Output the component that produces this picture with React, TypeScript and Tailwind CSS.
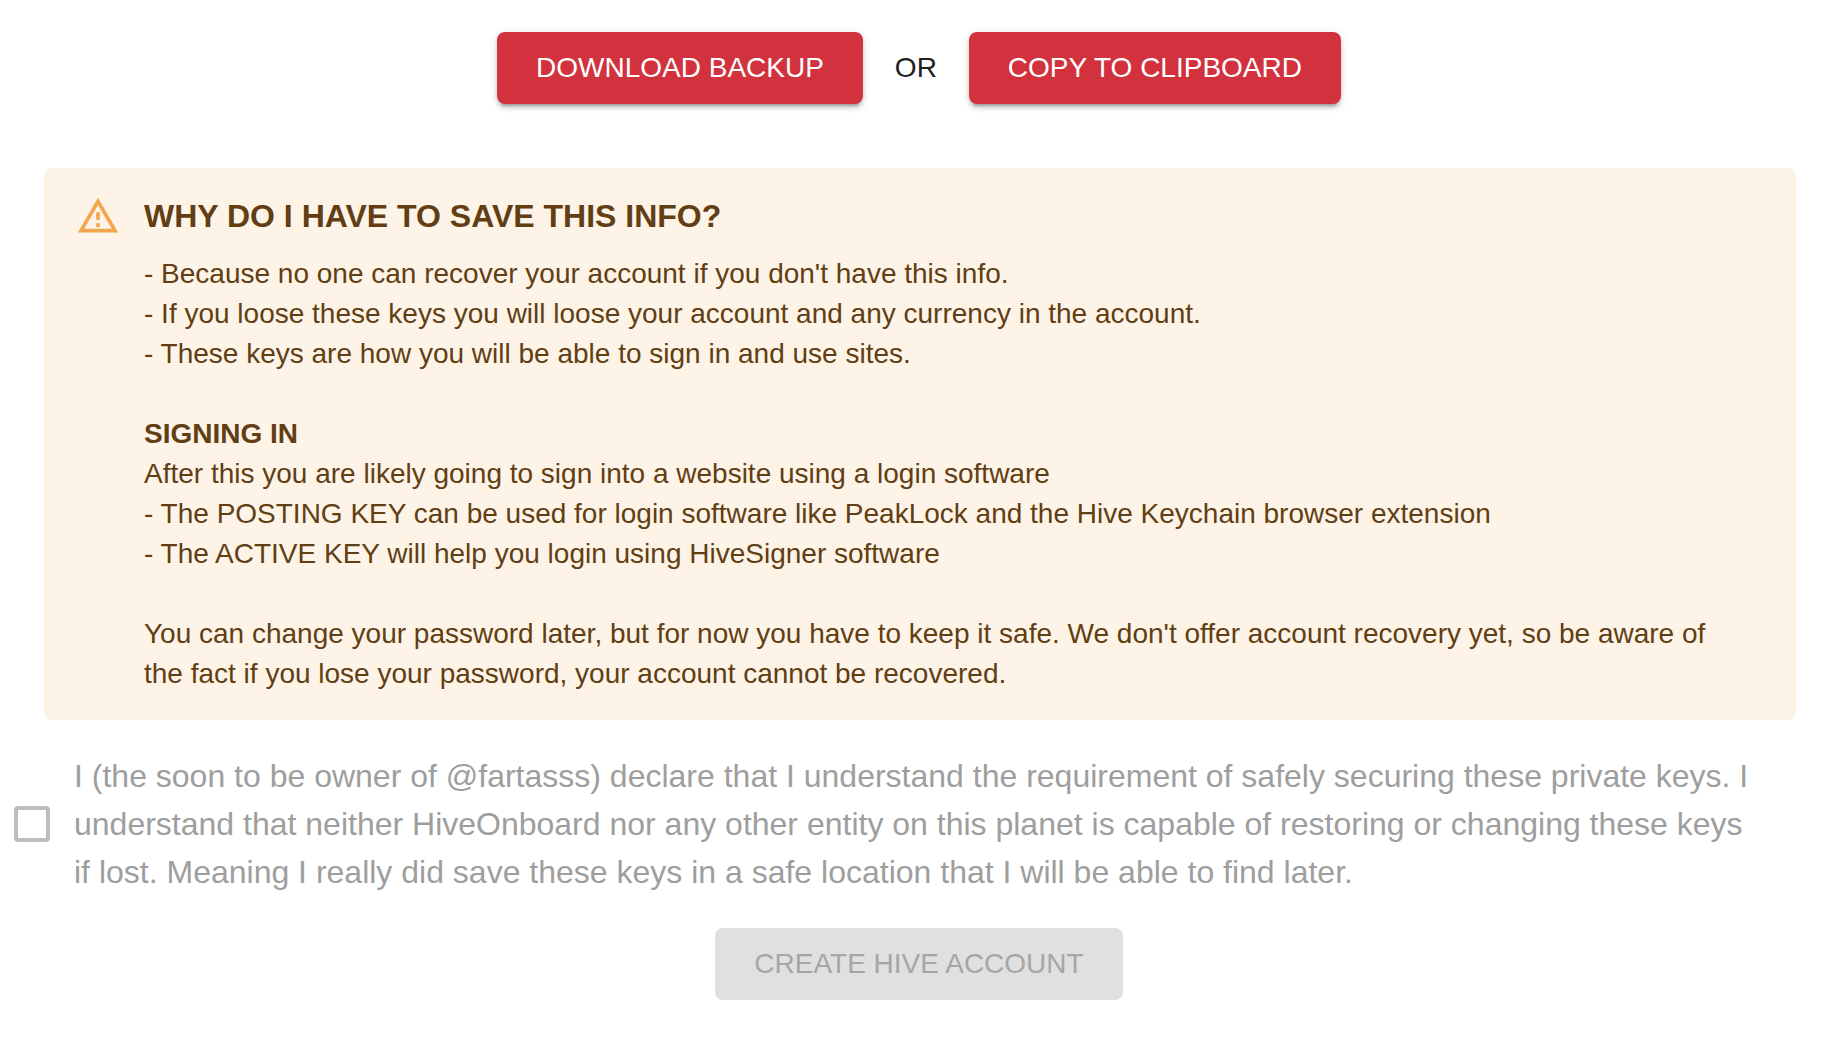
import { useState } from "react";

const BUTTON_BASE = "h-[72px] rounded-lg px-[39px] text-[28px] leading-[48px]";
const PRIMARY_BUTTON =
  "bg-[#d1323e] text-white shadow-[0_6px_2px_-4px_rgba(0,0,0,0.2),0_4px_4px_0_rgba(0,0,0,0.14),0_2px_10px_0_rgba(0,0,0,0.12)]";

function WarningIcon() {
  return (
    <svg
      viewBox="0 0 24 24"
      className="mt-[14px] size-11 flex-none fill-[#f3a64b]"
      aria-hidden="true"
    >
      <path d="M12 5.99L19.53 19H4.47L12 5.99M12 2L1 21h22L12 2zm1 14h-2v2h2v-2zm0-6h-2v4h2v-4z" />
    </svg>
  );
}

function SaveInfoAlert() {
  return (
    <section
      role="alert"
      className="mt-16 mr-[42px] ml-11 flex gap-6 rounded-lg bg-[#fdf3e7] px-8 py-3 text-[#613e13]"
    >
      <WarningIcon />
      <div className="pt-3 pr-5 pb-[14px] text-[28px] leading-10">
        <h2 className="mb-[14px] text-[32px] leading-[48px] font-bold">
          WHY DO I HAVE TO SAVE THIS INFO?
        </h2>
        <p>- Because no one can recover your account if you don't have this info.</p>
        <p>
          - If you loose these keys you will loose your account and any currency
          in the account.
        </p>
        <p>- These keys are how you will be able to sign in and use sites.</p>
        <h3 className="mt-10 font-bold">SIGNING IN</h3>
        <p>After this you are likely going to sign into a website using a login software</p>
        <p>
          - The POSTING KEY can be used for login software like PeakLock and the
          Hive Keychain browser extension
        </p>
        <p>- The ACTIVE KEY will help you login using HiveSigner software</p>
        <p className="mt-10">
          You can change your password later, but for now you have to keep it
          safe. We don't offer account recovery yet, so be aware of the fact if
          you lose your password, your account cannot be recovered.
        </p>
      </div>
    </section>
  );
}

export default function App() {
  const [accepted, setAccepted] = useState(false);

  return (
    <main className="min-h-screen bg-white pt-8 pb-16 font-['Liberation_Sans',Arial,sans-serif] text-[#212121]">
      <div className="flex items-center justify-center gap-8">
        <button type="button" className={`${BUTTON_BASE} ${PRIMARY_BUTTON}`}>
          DOWNLOAD BACKUP
        </button>
        <span className="text-[28px] leading-10">OR</span>
        <button type="button" className={`${BUTTON_BASE} ${PRIMARY_BUTTON}`}>
          COPY TO CLIPBOARD
        </button>
      </div>

      <SaveInfoAlert />

      <div className="mt-8 flex items-center gap-6 pr-20 pl-[14px]">
        <input
          id="declaration"
          type="checkbox"
          disabled
          checked={accepted}
          onChange={(e) => setAccepted(e.target.checked)}
          className="size-9 flex-none appearance-none rounded-sm border-4 border-[#bdbdbd]"
        />
        <label htmlFor="declaration" className="text-[32px] leading-[48px] text-[#9e9e9e]">
          I (the soon to be owner of @fartasss) declare that I understand the
          requirement of safely securing these private keys. I understand that
          neither HiveOnboard nor any other entity on this planet is capable of
          restoring or changing these keys if lost. Meaning I really did save
          these keys in a safe location that I will be able to find later.
        </label>
      </div>

      <div className="mt-8 flex justify-center">
        <button
          type="button"
          disabled={!accepted}
          className={`${BUTTON_BASE} bg-[#e0e0e0] text-[#a6a6a6]`}
        >
          CREATE HIVE ACCOUNT
        </button>
      </div>
    </main>
  );
}
